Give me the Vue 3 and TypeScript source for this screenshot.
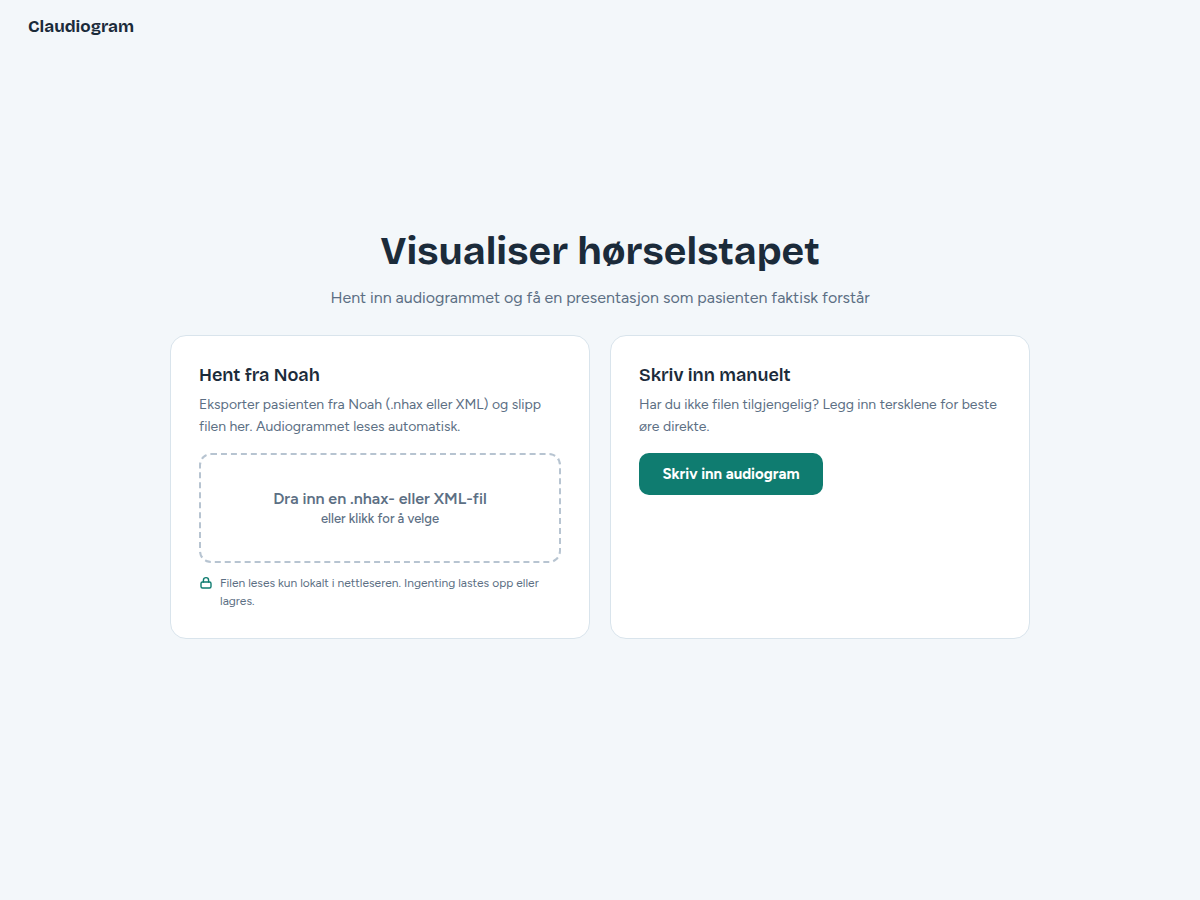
<script setup lang="ts">
import { ref } from 'vue'

const fileInput = ref<HTMLInputElement | null>(null)

function openPicker(): void {
  fileInput.value?.click()
}
</script>

<template>
  <div class="page">
    <header class="topbar">
      <span class="brand">Claudiogram</span>
    </header>
    <main class="main">
      <h1 class="title">Visualiser hørselstapet</h1>
      <p class="lead">Hent inn audiogrammet og få en presentasjon som pasienten faktisk forstår</p>
      <div class="cards">
        <section class="card">
          <h2>Hent fra Noah</h2>
          <p class="text">Eksporter pasienten fra Noah (.nhax eller XML) og slipp filen her. Audiogrammet leses automatisk.</p>
          <button type="button" class="dropzone" @click="openPicker">
            <span class="drop-title">Dra inn en .nhax- eller XML-fil</span>
            <span class="drop-sub">eller klikk for å velge</span>
          </button>
          <input ref="fileInput" type="file" accept=".nhax,.xml" aria-label="Velg fil" hidden />
          <div class="note">
            <svg class="lock" viewBox="0 0 14 14" fill="none" stroke="currentColor" stroke-width="1.4" aria-hidden="true">
              <rect x="2" y="6" width="10" height="6" rx="1.5" />
              <path d="M4.4 6V4.2a2.6 2.6 0 0 1 5.2 0V6" stroke-linecap="round" />
            </svg>
            <p>Filen leses kun lokalt i nettleseren. Ingenting lastes opp eller lagres.</p>
          </div>
        </section>
        <section class="card">
          <h2>Skriv inn manuelt</h2>
          <p class="text">Har du ikke filen tilgjengelig? Legg inn tersklene for beste øre direkte.</p>
          <button type="button" class="primary">Skriv inn audiogram</button>
        </section>
      </div>
    </main>
  </div>
</template>

<style>
body {
  margin: 0;
  background: #f3f7fa;
}
</style>

<style scoped>
.page {
  display: flex;
  flex-direction: column;
  min-height: 100vh;
  box-sizing: border-box;
  background: #f3f7fa;
  color: #1b2b3a;
  font-family: Figtree, Inter, sans-serif;
}
.topbar {
  padding: 15px 28px 13px;
}
.brand {
  display: block;
  font: 700 17px/24px "Bricolage Grotesque", Inter, sans-serif;
}
.main {
  flex: 1;
  display: flex;
  flex-direction: column;
  align-items: center;
  justify-content: center;
  padding: 0 24px 84px;
}
h1,
h2,
p {
  margin: 0;
}
.title {
  font: 700 39px/46px "Bricolage Grotesque", Inter, sans-serif;
  text-align: center;
}
.lead {
  margin: 10px 0 24px;
  font-size: 16px;
  line-height: 26px;
  color: #5c6f84;
  text-align: center;
}
.cards {
  display: grid;
  grid-template-columns: repeat(auto-fit, minmax(300px, 1fr));
  gap: 20px;
  width: 100%;
  max-width: 860px;
}
.card {
  padding: 28px;
  border: 1px solid #d9e4ec;
  border-radius: 16px;
  background: #fff;
}
h2 {
  margin-bottom: 7px;
  font: 600 18px/23px "Bricolage Grotesque", Inter, sans-serif;
}
.text {
  margin-bottom: 15px;
  font-size: 14px;
  line-height: 22px;
  color: #5c6f84;
}
.dropzone {
  display: flex;
  flex-direction: column;
  align-items: center;
  justify-content: center;
  width: 100%;
  padding: 33px 16px;
  border: 2px dashed #b7c4d1;
  border-radius: 12px;
  background: #fff;
  color: #5c6f84;
  font-family: inherit;
  cursor: pointer;
}
.drop-title {
  font-size: 16px;
  line-height: 22px;
  font-weight: 600;
}
.drop-sub {
  font-size: 13px;
  line-height: 18px;
  font-weight: 500;
}
.note {
  display: flex;
  gap: 7px;
  margin-top: 11px;
  font-size: 12px;
  line-height: 18px;
  color: #5c6f84;
}
.lock {
  flex: none;
  width: 14px;
  height: 14px;
  margin-top: 2px;
  color: #0f7c70;
}
.primary {
  min-width: 184px;
  padding: 11px 22px;
  border: 0;
  border-radius: 10px;
  background: #0f7c70;
  color: #fff;
  font: 700 15px/20px Figtree, Inter, sans-serif;
  cursor: pointer;
}
</style>
